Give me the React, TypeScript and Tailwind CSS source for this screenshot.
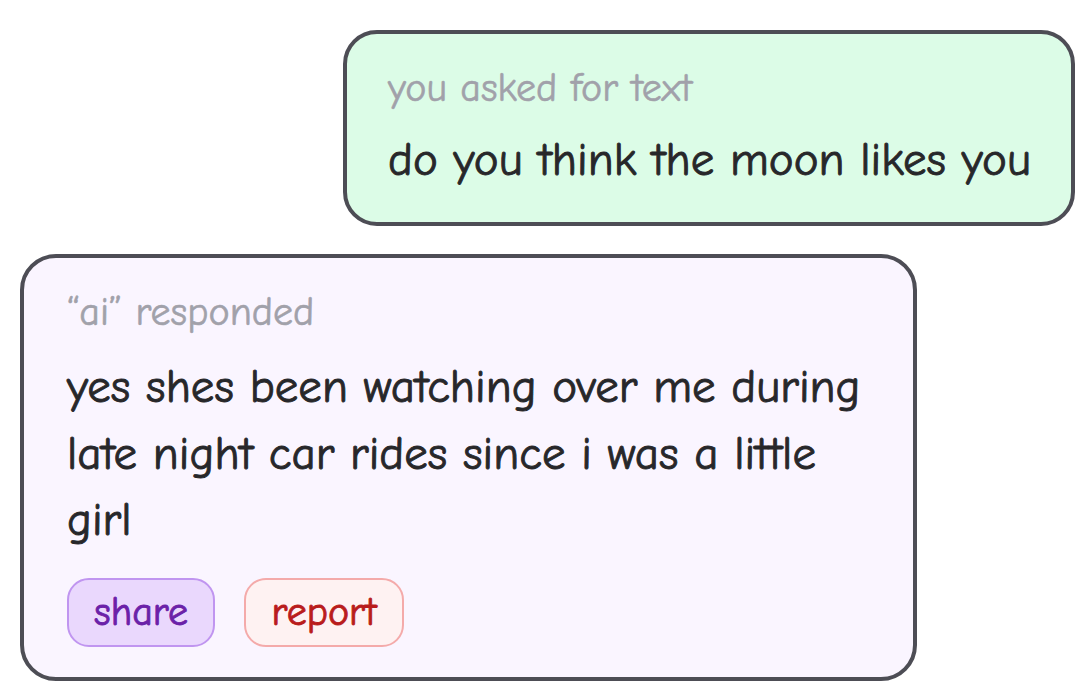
import React from "react";

export default function App() {
  const font = { fontFamily: '"Comic Neue", "Open Sans", "Noto Sans", sans-serif' };
  return (
    <div className="w-[1080px] h-[690px] bg-white overflow-hidden text-[#27272a] [-webkit-text-stroke:0.9px]" style={font}>
      <div className="flex flex-col pt-[30px] gap-[28px]">
        <div className="self-end mr-[5px] w-[732px] border-4 border-[#4d4d55] rounded-[34px] bg-[#dcfce7] pl-[41px] pr-[20px] pt-[36px] pb-[37px]">
          <div className="text-[40px] leading-[36px] text-[#a1a1aa] [-webkit-text-stroke:0.6px]">you asked for text</div>
          <div className="mt-[29px] text-[47px] leading-[50px]">do you think the moon likes you</div>
        </div>
        <div className="self-start ml-[20px] w-[897px] border-4 border-[#4d4d55] rounded-[36px] bg-[#faf5ff] px-[43px] pt-[36px] pb-[30px]">
          <div className="text-[40px] leading-[36px] text-[#a1a1aa] [-webkit-text-stroke:0.6px]">“ai” responded</div>
          <div className="mt-[24px] text-[47px] leading-[66.5px]">
            yes shes been watching over me during late night car rides since i was a little girl
          </div>
          <div className="mt-[24px] flex gap-[29px]">
            <button className="w-[148px] h-[69px] rounded-[22px] border-2 border-[#c095f0] bg-[#ead8fd] text-[#6b21a8] text-[40px] leading-none">
              share
            </button>
            <button className="w-[160px] h-[69px] rounded-[22px] border-2 border-[#f4aaaa] bg-[#fef2f2] text-[#b91c1c] text-[40px] leading-none">
              report
            </button>
          </div>
        </div>
      </div>
    </div>
  );
}
